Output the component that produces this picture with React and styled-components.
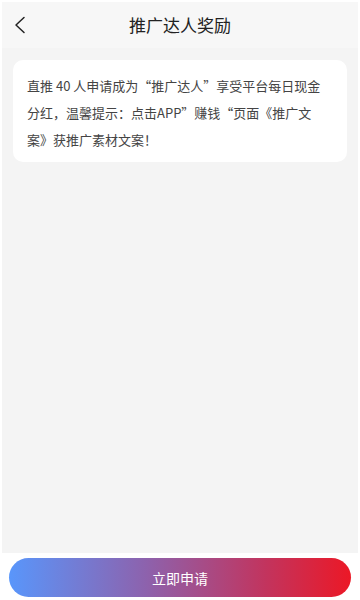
import styled, { createGlobalStyle } from 'styled-components'

const Global = createGlobalStyle`
  html, body { margin: 0; padding: 0; background: #fff; }
  body { font-family: "Noto Sans CJK SC", "Noto Sans", sans-serif; }
  * { box-sizing: border-box; }
`

const Back = () => (
  <svg width="14" height="18" viewBox="0 0 14 18">
    <path d="M11 1.5 L3 9 L11 16.5" fill="none" stroke="#222" strokeWidth="1.5" strokeLinecap="round" strokeLinejoin="round" />
  </svg>
)

const App = () => {
  return <Page>
    <Global />
    <Panel>
      <Header>
        <BackButton><Back /></BackButton>
        <Title>推广达人奖励</Title>
      </Header>
      <Body>
        <Card>
          直推 40 人申请成为“推广达人”享受平台每日现金分红，温馨提示：点击APP”赚钱“页面《推广文案》获推广素材文案！
        </Card>
      </Body>
    </Panel>
    <Footer>
      <ApplyButton>立即申请</ApplyButton>
    </Footer>
  </Page>
}

export default App;

const Page = styled.div`
    width: 360px;
    height: 600px;
    display: flex;
    flex-direction: column;
    background: #fff;
    padding-top: 2px;
`

const Panel = styled.div`
    flex: 1;
    margin: 0 2px;
    background: #f4f4f4;
    display: flex;
    flex-direction: column;
`

const Header = styled.div`
    height: 46px;
    background: #f7f7f7;
    position: relative;
    display: flex;
    align-items: center;
    justify-content: center;
`

const BackButton = styled.div`
    position: absolute;
    left: 11px;
    top: 14px;
    display: flex;
`

const Title = styled.div`
    font-size: 17px;
    color: #222;
    line-height: 44px;
`

const Body = styled.div`
    flex: 1;
    padding: 12px 11px;
`

const Card = styled.div`
    background: #fff;
    border-radius: 10px;
    padding: 12px 17px 9px 14px;
    font-size: 13px;
    line-height: 27px;
    color: #444;
`

const Footer = styled.div`
    height: 47px;
    padding: 5px 9px 3px;
    display: flex;
`

const ApplyButton = styled.div`
    flex: 1;
    border-radius: 20px;
    background: linear-gradient(90deg, #5996fb 0%, #8d62ad 40%, #c2345e 75%, #ec1826 100%);
    color: #fff;
    font-size: 14px;
    display: flex;
    align-items: center;
    justify-content: center;
`
